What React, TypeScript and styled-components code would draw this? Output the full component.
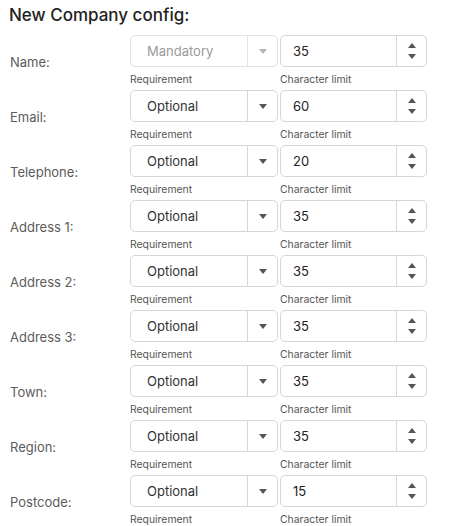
import React from "react";
import styled, { createGlobalStyle } from "styled-components";

const Global = createGlobalStyle`
  html, body { margin: 0; padding: 0; background: #fff; }
  body { font-family: Inter, "Noto Sans", sans-serif; }
`;

const Page = styled.div`
  padding: 4px 10px 0 9px;
  width: 450px;
  box-sizing: border-box;
`;

const Title = styled.h1`
  margin: 0 0 9px 0;
  font-size: 17px;
  line-height: 22px;
  font-weight: 500;
  color: #222;
`;

const List = styled.div`
  display: flex;
  flex-direction: column;
  gap: 3px;
`;

const Row = styled.div`
  display: grid;
  grid-template-columns: 119px 148px 147px;
  column-gap: 2px;
  align-items: center;
`;

const Label = styled.div`
  font-size: 13px;
  color: #5b5b5b;
  padding: 2px 0 0 1px;
`;

const Field = styled.div`
  display: flex;
  flex-direction: column;
`;

const Box = styled.div<{ $disabled?: boolean }>`
  display: flex;
  height: 32px;
  box-sizing: border-box;
  border: 1px solid ${(p) => (p.$disabled ? "#e4e4e4" : "#d6d6d6")};
  border-radius: 5px;
  background: #fff;
  overflow: hidden;
`;

const SelectText = styled.div<{ $disabled?: boolean }>`
  flex: 1;
  display: flex;
  align-items: center;
  padding-left: 16px;
  font-size: 13px;
  color: ${(p) => (p.$disabled ? "#9a9a9a" : "#333")};
`;

const ArrowCell = styled.div<{ $disabled?: boolean }>`
  width: 29px;
  border-left: 1px solid ${(p) => (p.$disabled ? "#e4e4e4" : "#d6d6d6")};
  display: flex;
  align-items: center;
  justify-content: center;
  color: ${(p) => (p.$disabled ? "#b5b5b5" : "#555")};
`;

const NumberText = styled.div`
  flex: 1;
  display: flex;
  align-items: center;
  padding-left: 12px;
  font-size: 13px;
  color: #222;
`;

const SpinCell = styled.div`
  width: 29px;
  border-left: 1px solid #d6d6d6;
  display: flex;
  flex-direction: column;
  align-items: center;
  justify-content: center;
  gap: 6px;
  color: #555;
`;

const Caption = styled.div`
  margin-top: 6px;
  font-size: 10.4px;
  line-height: 14px;
  color: #555;
`;

const Tri = ({ up }: { up?: boolean }) => (
  <svg width="8" height="5" viewBox="0 0 8 5" style={{ display: "block" }}>
    <path d={up ? "M4 0 L8 5 L0 5 Z" : "M0 0 L8 0 L4 5 Z"} fill="currentColor" />
  </svg>
);

const rows = [
  { label: "Name:", req: "Mandatory", limit: 35, disabled: true },
  { label: "Email:", req: "Optional", limit: 60 },
  { label: "Telephone:", req: "Optional", limit: 20 },
  { label: "Address 1:", req: "Optional", limit: 35 },
  { label: "Address 2:", req: "Optional", limit: 35 },
  { label: "Address 3:", req: "Optional", limit: 35 },
  { label: "Town:", req: "Optional", limit: 35 },
  { label: "Region:", req: "Optional", limit: 35 },
  { label: "Postcode:", req: "Optional", limit: 15 },
];

export default function App() {
  return (
    <Page>
      <Global />
      <Title>New Company config:</Title>
      <List>
        {rows.map((r) => (
          <Row key={r.label}>
            <Label>{r.label}</Label>
            <Field>
              <Box $disabled={r.disabled}>
                <SelectText $disabled={r.disabled}>{r.req}</SelectText>
                <ArrowCell $disabled={r.disabled}>
                  <Tri />
                </ArrowCell>
              </Box>
              <Caption>Requirement</Caption>
            </Field>
            <Field>
              <Box>
                <NumberText>{r.limit}</NumberText>
                <SpinCell>
                  <Tri up />
                  <Tri />
                </SpinCell>
              </Box>
              <Caption>Character limit</Caption>
            </Field>
          </Row>
        ))}
      </List>
    </Page>
  );
}
